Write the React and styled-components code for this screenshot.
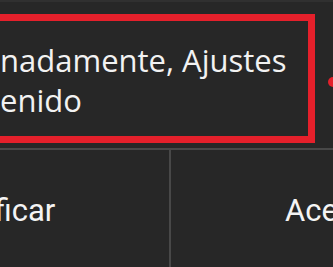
import React from 'react';
import styled, { createGlobalStyle } from 'styled-components';

const GlobalStyle = createGlobalStyle`
  html, body {
    margin: 0;
    padding: 0;
    background: #272727;
  }
`

const Screen = styled.div`
  position: relative;
  width: 333px;
  height: 267px;
  overflow: hidden;
  background: #272727;
`

const Dialog = styled.div`
  width: 716px;
  margin-left: -189px;
  display: flex;
  flex-direction: column;
`

const Message = styled.div`
  height: 150px;
  padding-top: 12px;
  box-sizing: border-box;
  border-bottom: 2px solid #484848;
  border-top: 2px solid #303030;
`

const Highlight = styled.div`
  margin-left: 20px;
  width: 484px;
  height: 129px;
  box-sizing: border-box;
  border: 7px solid #e5202b;
  padding: 19px 0 0 162px;
`

const MessageText = styled.p`
  margin: 0;
  font-family: "Open Sans", "Noto Sans", sans-serif;
  font-size: 31px;
  line-height: 40px;
  color: #f2f2f2;
  white-space: nowrap;
`

const Buttons = styled.div`
  display: grid;
  grid-template-columns: 358px 338px;
  height: 120px;
`

const Button = styled.div`
  padding-top: 41px;
  text-align: center;
  font-family: Roboto, "Liberation Sans", sans-serif;
  font-size: 31px;
  line-height: 40px;
  color: #f4f4f4;
  border-left: ${(p) => (p.divider ? '2px solid #484848' : 'none')};
`

const ArrowTip = styled.div`
  position: absolute;
  right: -5px;
  top: 77px;
  width: 10px;
  height: 10px;
  border-radius: 50%;
  background: #e5202b;
`

const App = () => {
  return (
    <Screen>
      <GlobalStyle />
      <Dialog>
        <Message>
          <Highlight>
            <MessageText>nadamente, Ajustes</MessageText>
            <MessageText>enido</MessageText>
          </Highlight>
        </Message>
        <Buttons>
          <Button>Modificar</Button>
          <Button divider>Aceptar</Button>
        </Buttons>
      </Dialog>
      <ArrowTip />
    </Screen>
  );
};

export default App;
